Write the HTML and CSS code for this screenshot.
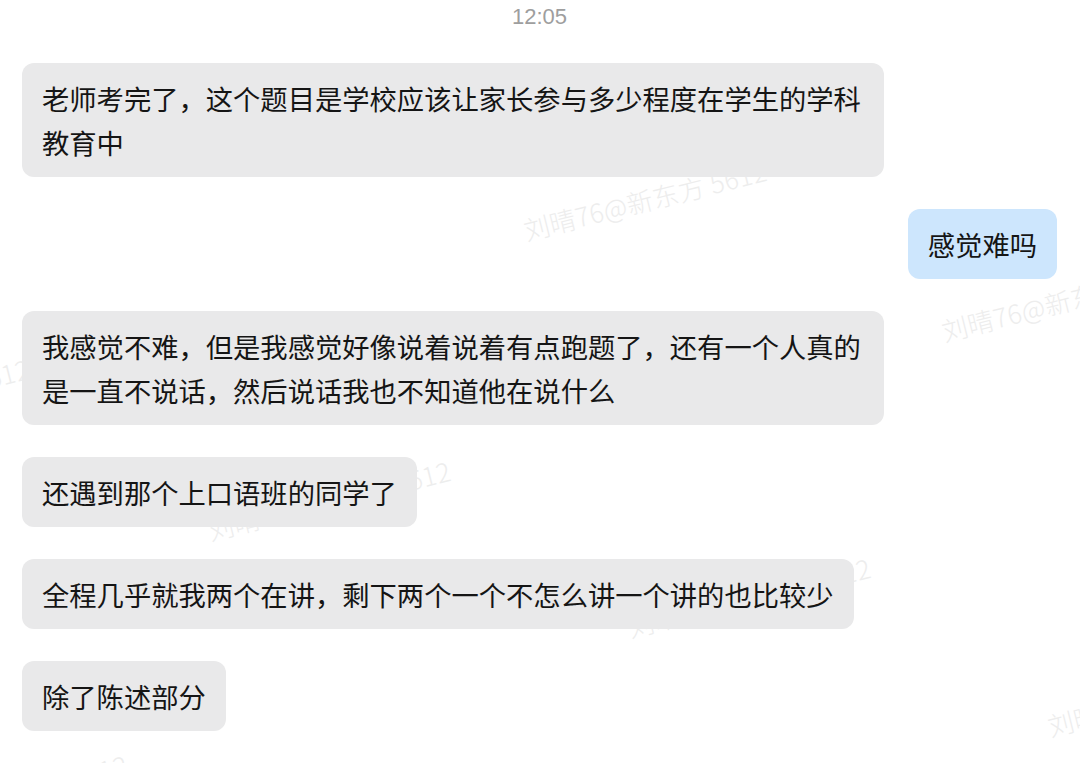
FILE: index.html
```html
<!DOCTYPE html>
<html lang="zh-CN">
<head>
<meta charset="utf-8">
<title>聊天记录</title>
<link rel="stylesheet" href="styles.css">
</head>
<body>
<div class="screen">
  <div class="watermarks" aria-hidden="true">
    <span class="wm" style="left:107px;top:120px">刘晴76@新东方 5612</span>
    <span class="wm" style="left:524px;top:217px">刘晴76@新东方 5612</span>
    <span class="wm" style="left:942px;top:318px">刘晴76@新东方 5612</span>
    <span class="wm" style="left:-213px;top:415px">刘晴76@新东方 5612</span>
    <span class="wm" style="left:208px;top:517px">刘晴76@新东方 5612</span>
    <span class="wm" style="left:628px;top:614px">刘晴76@新东方 5612</span>
    <span class="wm" style="left:1048px;top:713px">刘晴76@新东方 5612</span>
    <span class="wm" style="left:-115px;top:811px">刘晴76@新东方 5612</span>
  </div>
  <div class="chat">
    <div class="time">12:05</div>
    <div class="msg left">老师考完了，这个题目是学校应该让家长参与多少程度在学生的学科教育中</div>
    <div class="msg right">感觉难吗</div>
    <div class="msg left">我感觉不难，但是我感觉好像说着说着有点跑题了，还有一个人真的是一直不说话，然后说话我也不知道他在说什么</div>
    <div class="msg left">还遇到那个上口语班的同学了</div>
    <div class="msg left">全程几乎就我两个在讲，剩下两个一个不怎么讲一个讲的也比较少</div>
    <div class="msg left">除了陈述部分</div>
  </div>
</div>
</body>
</html>
```

FILE: styles.css
```css
html, body {
  margin: 0;
  padding: 0;
  background: #ffffff;
}

.screen {
  position: relative;
  width: 1080px;
  height: 763px;
  overflow: hidden;
  background: #ffffff;
  font-family: "Noto Sans CJK SC", "Noto Sans", sans-serif;
}

.watermarks {
  position: absolute;
  inset: 0;
  z-index: 0;
  pointer-events: none;
}

.wm {
  position: absolute;
  white-space: nowrap;
  font-family: "Noto Sans CJK SC", "Noto Sans", sans-serif;
  font-weight: 300;
  font-size: 26px;
  line-height: 26px;
  letter-spacing: 0.5px;
  color: #ededed;
  transform-origin: 0 50%;
  transform: rotate(-14deg);
}

.chat {
  position: relative;
  z-index: 1;
  display: flex;
  flex-direction: column;
  gap: 32px;
  padding: 0 23px 0 22px;
}

.time {
  align-self: center;
  padding-top: 4px;
  margin-bottom: 1px;
  font-family: "Liberation Sans", Arial, sans-serif;
  font-size: 22px;
  line-height: 26px;
  color: #9e9e9e;
}

.msg {
  max-width: 862px;
  box-sizing: border-box;
  padding: 13px 20px;
  border-radius: 12px;
  font-size: 27.3px;
  line-height: 44px;
  color: #151515;
}

.left {
  align-self: flex-start;
  background: #e9e9ea;
}

.right {
  align-self: flex-end;
  background: #cde6fd;
}
```
